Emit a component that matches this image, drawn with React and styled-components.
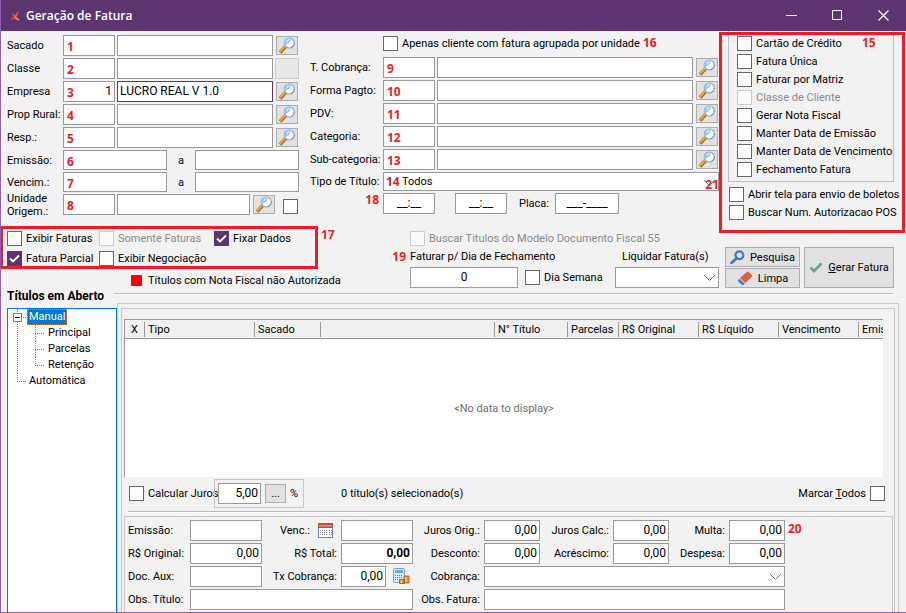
import React from "react";
import styled, { createGlobalStyle, css } from "styled-components";

const PURPLE = "#5c3571";
const RED = "#ed1c24";
const FACE = "#f2f2f2";
const EDGE = "#999999";
const SOFT = "#c8c8c8";

const GlobalStyle = createGlobalStyle`
  *, *::before, *::after { box-sizing: border-box; }
  body { margin: 0; background: ${FACE}; }
  body, input, select, button, table {
    font-family: Roboto, "Liberation Sans", sans-serif;
    font-size: 11px;
    line-height: 13px;
    color: #000;
  }
`;

/* ---------- window ---------- */

const Window = styled.div`
  display: flex;
  flex-direction: column;
  min-height: 100vh;
  border: solid #8c5fb0;
  border-width: 0 0 1px 1px;
  background: ${FACE};
  overflow: hidden;
  white-space: nowrap;
`;

const TitleBar = styled.header`
  display: flex;
  align-items: center;
  height: 31px;
  margin-left: -1px;
  padding-left: 9px;
  background: ${PURPLE};
  color: #fff;
`;

const Title = styled.h1`
  flex: 1;
  margin: 0 0 0 4px;
  font: 600 12px/16px "Open Sans", "Noto Sans", sans-serif;
`;

const WindowButton = styled.button`
  display: grid;
  place-items: center;
  width: 46px;
  height: 31px;
  padding: 0;
  border: 0;
  background: none;
  color: #fff;
`;

/* ---------- shared controls ---------- */

const controlBase = css`
  width: ${(p) => (p.$w ? `${p.$w}px` : "100%")};
  height: ${(p) => p.$h || 21}px;
  min-width: 0;
  margin: 0;
  border: 1px solid ${(p) => (p.$active ? PURPLE : EDGE)};
  border-radius: 0;
  background: #fff;
  outline: none;
  font-size: 12px;
`;

const TextBox = styled.input`
  ${controlBase}
  padding: 0 2px 2px;
  text-align: ${(p) => p.$align || "left"};
  font-weight: ${(p) => (p.$bold ? 700 : 400)};
`;

const SelectWrap = styled.div`
  position: relative;
  min-width: 0;
  grid-column: ${(p) => p.$span || "auto"};
`;

const SelectBox = styled.select`
  ${controlBase}
  display: block;
  padding: 0 20px 0 ${(p) => p.$indent || 3}px;
  appearance: none;
  font-size: 11px;
`;

const SelectArrow = styled.svg`
  position: absolute;
  top: 7px;
  right: 3px;
  pointer-events: none;
`;

const Span = styled.div`
  grid-column: span ${(p) => p.$n};
  display: flex;
  min-width: 0;
`;

const Marked = styled.div`
  position: relative;
  display: flex;
  flex: none;
`;

const Badge = styled.span`
  color: ${RED};
  font: bold 12px/14px "Open Sans", "Noto Sans", sans-serif;
`;

const OverBadge = styled(Badge)`
  position: absolute;
  left: 4px;
  top: 5px;
  pointer-events: none;
`;

const ArrowBadge = styled(Badge)`
  position: absolute;
  right: 0;
  top: 6px;
  pointer-events: none;
`;

const SideBadge = styled(Badge)`
  position: absolute;
  right: 100%;
  top: 0;
  margin-right: 4px;
`;

const EndBadge = styled(Badge)`
  position: absolute;
  left: 100%;
  top: 2px;
  margin-left: 3px;
`;

const CheckLabel = styled.label`
  display: flex;
  align-items: center;
  gap: 4px;
  height: 15px;
  color: ${(p) => (p.$off ? "#8a8a8a" : "#000")};
`;

const CheckBox = styled.input`
  flex: none;
  width: 15px;
  height: 15px;
  margin: 0;
  appearance: none;
  border: 1px solid #666;
  background: #fff;

  &:checked {
    border-color: ${PURPLE};
    background: ${PURPLE};
  }
  &:disabled { border-color: #ccc; background: #fafafa; }
`;

const TickHolder = styled.span`
  position: relative;
  display: flex;
`;

const Tick = styled.svg`
  position: absolute;
  inset: 0;
  pointer-events: none;
`;

const PushButton = styled.button`
  display: flex;
  align-items: center;
  justify-content: center;
  gap: ${(p) => p.$gap || 0}px;
  flex: none;
  width: ${(p) => p.$w}px;
  height: ${(p) => p.$h}px;
  margin: ${(p) => p.$m || 0};
  padding: 0;
  border: 1px solid ${(p) => (p.disabled ? "#ccc" : "#adadad")};
  border-radius: 0;
  background: ${(p) => (p.disabled ? "#e8e8e8" : "#e1e1e1")};
`;

/* ---------- top form ---------- */

const FormArea = styled.section`
  display: grid;
  grid-template-columns: 298px minmax(0, 1fr) 187px;
  height: 195px;
`;

const Rows = styled.div`
  display: flex;
  flex-direction: column;
  gap: 2px;
  padding: ${(p) => p.$pad};
`;

const FieldRow = styled.div`
  display: flex;
  align-items: center;
  height: ${(p) => p.$h || 21}px;
  gap: 2px;
`;

const FieldLabel = styled.label`
  flex: none;
  width: ${(p) => p.$w}px;
  margin-right: -2px;
  white-space: pre;
`;

const Between = styled.label`
  flex: 1;
  text-align: center;
`;

const AgreeRow = styled.div`
  display: flex;
  align-items: center;
  gap: 3px;
  height: 20px;
  padding: 0 0 4px 73px;
`;

const TimeRow = styled.div`
  display: flex;
  align-items: center;
  height: 21px;
  padding-left: 73px;
`;

const TimeEnd = styled(Marked)`
  margin-left: 20px;
`;

const PlateLabel = styled.label`
  width: 48px;
  padding-left: 12px;
`;

const FillSelect = styled(SelectWrap)`
  flex: 1;
`;

const TypeBadge = styled(OverBadge)`
  left: 3px;
  top: 3px;
`;

const ExtraCheck = styled(CheckBox)`
  margin: 3px 1px 0 5px;
`;

const redFrame = css`
  position: relative;
  &::after {
    content: "";
    position: absolute;
    border: 3px solid ${RED};
    pointer-events: none;
  }
`;

const OptionsColumn = styled.div`
  ${redFrame}
  padding: 0 10px 0 9px;
  &::after { inset: 1px 1px -7px 0; }
`;

const OptionsGroup = styled.fieldset`
  position: relative;
  display: flex;
  flex-direction: column;
  gap: 3px;
  margin: 0 2px 5px 0;
  padding: 5px 0 4px 8px;
  border: solid #bfbfbf;
  border-width: 0 1px 1px;
  min-width: 0;
`;

const GroupBadge = styled(Badge)`
  position: absolute;
  left: 133px;
  top: 5px;
`;

const LooseOptions = styled.div`
  display: flex;
  flex-direction: column;
  gap: 3px;
  padding-left: 1px;
`;

/* ---------- filters band ---------- */

const FilterArea = styled.section`
  display: flex;
  height: 64px;
  padding-right: 12px;
`;

const FilterLeft = styled.div`
  flex: none;
  width: 339px;
`;

const FilterChecks = styled.div`
  ${redFrame}
  display: grid;
  grid-template-columns: 92px 115px auto;
  align-content: start;
  gap: 5px 0;
  width: 317px;
  height: 43px;
  padding: 5px 0 0 6px;
  &::after { inset: 0 0 0 -1px; }
`;

const Legend = styled.div`
  display: flex;
  align-items: center;
  gap: 6px;
  height: 15px;
  margin: 4px 0 0 130px;
`;

const Swatch = styled.span`
  flex: none;
  width: 11px;
  height: 11px;
  background: #f00;
`;

const FilterMiddle = styled.div`
  flex: 1;
  display: grid;
  grid-template-columns: 108px 1fr 104px;
  grid-template-rows: 15px 13px 21px;
  row-gap: 4px;
  align-items: center;
  padding: 5px 0 0 70px;
`;

const HeadLabel = styled.label`
  position: relative;
  grid-column: ${(p) => p.$col};
  padding-left: ${(p) => p.$indent || 0}px;
`;

const WeekCheck = styled.div`
  padding-left: 7px;
`;

const Actions = styled.div`
  display: grid;
  grid-template-columns: 75px 90px;
  gap: 1px 4px;
  align-content: start;
  padding: 21px 0 0 6px;
`;

const TallCell = styled.div`
  grid-column: 2;
  grid-row: 1 / 3;
`;

/* ---------- lower area ---------- */

const SectionHead = styled.div`
  display: flex;
  height: 13px;
  padding: 0 13px 0 6px;
`;

const SectionTitle = styled.h2`
  width: 107px;
  margin: 0;
  font-size: 12px;
  line-height: 13px;
  font-weight: 700;
`;

const Rule = styled.div`
  flex: 1;
  height: 2px;
  margin-top: 3px;
  border-top: 1px solid #bbb;
  background: #fff;
`;

const DetailRule = styled(Rule)`
  flex: none;
  margin: 0 8px 0 4px;
`;

const Lower = styled.main`
  flex: 1;
  display: flex;
  padding: 0 7px 0 6px;
`;

const TreeBox = styled.nav`
  flex: none;
  width: 110px;
  margin-top: 5px;
  padding-left: 6px;
  border: 1px solid #0078d7;
  border-bottom: 0;
  background: #fff;
`;

const TreeList = styled.ul`
  margin: 0;
  padding: 0;
  list-style: none;
`;

const TreeItem = styled.li`
  position: relative;
  padding-left: ${(p) => (p.$child ? 19 : 13)}px;
  line-height: 16px;

  &::before {
    content: "";
    position: absolute;
    left: ${(p) => (p.$child ? 8 : 3)}px;
    top: 0;
    width: 9px;
    height: 9px;
    border: dotted #808080;
    border-width: 0 0 1px 1px;
  }
  &:not(:last-child)::after {
    content: "";
    position: absolute;
    left: ${(p) => (p.$child ? 8 : 3)}px;
    top: 9px;
    bottom: 0;
    border-left: 1px dotted #808080;
  }
`;

const TreeLink = styled.a`
  display: inline-block;
  height: 16px;
  padding: 0 2px;
  color: ${(p) => (p.$on ? "#fff" : "#000")};
  background: ${(p) => (p.$on ? "#0078d7" : "none")};
  outline: ${(p) => (p.$on ? "1px dotted #e08030" : "none")};
  outline-offset: -1px;
  text-decoration: none;
`;

const Toggle = styled.button`
  position: absolute;
  z-index: 1;
  left: -1px;
  top: 4px;
  display: grid;
  place-items: center;
  width: 9px;
  height: 9px;
  padding: 0;
  border: 1px solid #808080;
  background: #fff;
`;

const OuterPanel = styled.div`
  flex: 1;
  display: flex;
  min-width: 0;
  padding: 4px 3px 0;
  border: 1px solid ${SOFT};
  border-bottom: 0;
`;

const InnerPanel = styled.div`
  flex: 1;
  display: flex;
  flex-direction: column;
  min-width: 0;
  padding: 10px 0 0 2px;
  border: 1px solid ${SOFT};
  border-bottom: 0;
`;

const DataGrid = styled.div`
  flex: 1;
  display: flex;
  flex-direction: column;
  min-height: 158px;
  margin-right: 11px;
  border: solid ${EDGE};
  border-width: 1px 0 0 1px;
  background: #fff;
  overflow: hidden;
`;

const GridTable = styled.table`
  width: 814px;
  table-layout: fixed;
  border-collapse: separate;
  border-spacing: 0;
`;

const HeadCell = styled.th`
  width: ${(p) => p.$w}px;
  height: 19px;
  padding: 1px 0 0 ${(p) => (p.$first ? 6 : 3)}px;
  border-bottom: 1px solid ${EDGE};
  background: linear-gradient(${EDGE} 0 0) right 0 top 2px / 1px 15px no-repeat #f0f0f0;
  font-weight: 400;
  text-align: left;
`;

const Empty = styled.p`
  flex: 1;
  display: grid;
  place-items: center;
  margin: 0;
  color: #6d6d6d;
`;

const JurosBar = styled.div`
  display: flex;
  align-items: center;
  height: 34px;
  padding: 0 9px 1px 5px;
`;

const JurosCheck = styled.div`
  width: 85px;
`;

const JurosBox = styled.div`
  display: flex;
  align-items: center;
  gap: 4px;
  width: 90px;
  height: 29px;
  padding: 0 3px;
  border: 1px solid ${SOFT};
`;

const Selected = styled.output`
  flex: 1;
  padding-left: 37px;
`;

const Detail = styled.form`
  display: grid;
  grid-template-columns: 62px 72px 79px 72px 71px 56px 73px 56px 60px 56px;
  gap: 2px 0;
  align-items: center;
  margin: 3px 1px 0 0;
  padding: 3px 3px 2px;
  border: 1px solid ${SOFT};
  border-bottom: 0;
`;

const DetailLabel = styled.label`
  display: flex;
  align-items: center;
  justify-content: ${(p) => (p.$left ? "flex-start" : "flex-end")};
  gap: 8px;
  padding-right: ${(p) => p.$pr || 4}px;
`;

const FeeCell = styled.div`
  display: flex;
  align-items: center;
  gap: 7px;
`;

/* ---------- icons ---------- */

const AppIcon = () => (
  <svg width="13" height="14" viewBox="0 0 13 14" aria-hidden="true">
    <path d="M9.500 1L8.500 6.500 6 9 1 11.500 4.500 7.500 2.500 4 6 6.500z" fill="#ef5a2a" />
    <path d="M6.500 7.500L11 11 9 11.500 5 9z" fill="#f7913c" />
    <path d="M5 7L2 11.500 6.500 9.500z" fill="#e2342c" />
  </svg>
);

const LensIcon = () => (
  <svg width="18" height="17" viewBox="0 0 18 17" aria-hidden="true">
    <path d="M2 15.5l5.5-6" stroke="#8d6a3b" strokeWidth="3.6" />
    <path d="M1.8 14.8l5.2-5.6" stroke="#f5a623" strokeWidth="2.4" />
    <circle cx="11.3" cy="6" r="5" fill="#fff" stroke="#8fa6cf" strokeWidth="1.2" />
    <path d="M7 8.5a5 5 0 016-7.3L12 5z" fill="#9cc6f5" />
    <path d="M9 4.5a3 3 0 012.5-2" stroke="#e8f4ff" strokeWidth="1.2" fill="none" />
    <path d="M13.5 10.2a5 5 0 002.8-4.5" stroke="#4f6ba8" strokeWidth="1" fill="none" strokeDasharray="1 1" />
  </svg>
);

const SearchIcon = () => (
  <svg width="15" height="14" viewBox="0 0 15 14" aria-hidden="true">
    <circle cx="9.4" cy="5.2" r="3.9" fill="none" stroke="#4478b6" strokeWidth="2.2" />
    <path d="M6.6 8.2L1.6 12.8" stroke="#4478b6" strokeWidth="2.8" strokeLinecap="round" />
  </svg>
);

const EraserIcon = () => (
  <svg width="16" height="15" viewBox="0 0 16 15" aria-hidden="true">
    <path d="M9.5 1.2Q10.500 0 11.700 1L14.800 3.800Q15.800 5 14.800 6L8.500 12 3 7z" fill="#dc6044" />
    <path d="M2.500 7.700L7.800 12.500 6.800 13.800Q5.500 14.300 4.500 13.500L1 10.200Q.5 9.500 1.200 8.900z" fill="#4a7dbb" />
  </svg>
);

const CheckIcon = () => (
  <svg width="14" height="11" viewBox="0 0 14 11" aria-hidden="true">
    <path d="M1.500 5.500L5 9 12.500 1.500" fill="none" stroke="#6f9f8e" strokeWidth="2.700" />
  </svg>
);

const CalendarIcon = () => (
  <svg width="15" height="15" viewBox="0 0 15 15" aria-hidden="true">
    <rect x=".5" y=".5" width="14" height="14" fill="#fff" stroke="#6a87c8" />
    <path d="M0 0h15v5H0z" fill="#c94a3d" />
    <path d="M1 2h13v1.500H1z" fill="#ea9183" />
    <path d="M2 7.500h8M2 9.500h8M2 11.500h8" stroke="#8b96b5" strokeDasharray="1 1" />
    <path d="M11 7.500h3M11 9.500h3M11 11.500h3" stroke="#e5483d" strokeDasharray="1 1" />
  </svg>
);

const CalculatorIcon = () => (
  <svg width="17" height="17" viewBox="0 0 17 17" aria-hidden="true">
    <rect x=".5" y=".5" width="11" height="14" rx="1" fill="#dfe9fa" stroke="#7f9bd1" />
    <rect x="2" y="2" width="8" height="3" fill="#5fb0e6" />
    <path d="M2 7.500h5M2 9.500h5M2 11.500h4" stroke="#5373b8" strokeDasharray="1 1" />
    <path d="M8 7.500h2M8 9.500h2" stroke="#d8423a" strokeDasharray="1 1" />
    <path d="M11 8h5v7h-5zM6.500 11.500h5v4h-5z" fill="#d9953f" stroke="#8f5a22" strokeWidth=".8" />
    <path d="M13 9v5M8.500 12.500v2.500" stroke="#ffe3a0" strokeWidth="1.200" />
  </svg>
);

const Arrow = () => (
  <SelectArrow width="13" height="8" viewBox="0 0 13 8" aria-hidden="true">
    <path d="M1 1l5.500 5.500L12 1" fill="none" stroke="#777" />
  </SelectArrow>
);

/* ---------- composed parts ---------- */

function Check({ label, checked, disabled }) {
  return (
    <CheckLabel $off={disabled}>
      <TickHolder>
        <CheckBox type="checkbox" defaultChecked={checked} disabled={disabled} />
        {checked && (
          <Tick width="15" height="15" viewBox="0 0 15 15">
            <path d="M3 7.500l3 3L12 4.500" fill="none" stroke="#fff" strokeWidth="1.800" />
          </Tick>
        )}
      </TickHolder>
      {label}
    </CheckLabel>
  );
}

function SearchButton({ label }) {
  return (
    <PushButton type="button" $w={22} $h={19} $m="0 1px" aria-label={`Buscar ${label}`}>
      <LensIcon />
    </PushButton>
  );
}

function Lookup({ id, label, n, labelWidth, code, text, blank, children }) {
  return (
    <FieldRow>
      <FieldLabel htmlFor={id} $w={labelWidth}>{label}</FieldLabel>
      <Marked>
        <TextBox id={id} $w={52} $align="right" defaultValue={code} />
        <OverBadge>{n}</OverBadge>
      </Marked>
      <TextBox aria-label={`${label} descrição`} defaultValue={text} $active={!!text} />
      {blank ? <PushButton type="button" disabled $w={24} $h={21} aria-label={label} /> : <SearchButton label={label} />}
      {children}
    </FieldRow>
  );
}

function DateRange({ id, label, n }) {
  return (
    <FieldRow $h={20}>
      <FieldLabel htmlFor={id} $w={56}>{label}</FieldLabel>
      <Marked>
        <TextBox id={id} $w={104} $h={20} />
        <OverBadge>{n}</OverBadge>
      </Marked>
      <Between htmlFor={`${id}-fim`}>a</Between>
      <Marked>
        <TextBox id={`${id}-fim`} $w={104} $h={20} />
      </Marked>
    </FieldRow>
  );
}

function Amount({ id, label, value = "0,00", bold }) {
  return (
    <>
      <DetailLabel htmlFor={id}>{label}</DetailLabel>
      <TextBox id={id} $align="right" $bold={bold} defaultValue={value} />
    </>
  );
}

const leftLookups = [
  { id: "sacado", label: "Sacado", n: 1 },
  { id: "classe", label: "Classe", n: 2, blank: true },
  { id: "empresa", label: "Empresa", n: 3, code: "1", text: "LUCRO REAL V 1.0" },
  { id: "prop", label: "Prop Rural:", n: 4 },
  { id: "resp", label: "Resp.:", n: 5 },
];

const middleLookups = [
  { id: "tcob", label: "T. Cobrança:", n: 9 },
  { id: "forma", label: "Forma Pagto:", n: 10 },
  { id: "pdv", label: "PDV:", n: 11 },
  { id: "cat", label: "Categoria:", n: 12 },
  { id: "subcat", label: "Sub-categoria:", n: 13 },
];

const options = [
  "Cartão de Crédito", "Fatura Única", "Faturar por Matriz", "Classe de Cliente",
  "Gerar Nota Fiscal", "Manter Data de Emissão", "Manter Data de Vencimento", "Fechamento Fatura",
];

const columns = [
  ["X", 20], ["Tipo", 110], ["Sacado", 66], ["", 174], ["N° Título", 73], ["Parcelas", 51],
  ["R$ Original", 80], ["R$ Líquido", 80], ["Vencimento", 80], ["Emis", 80],
];

export default function App() {
  return (
    <Window>
      <GlobalStyle />
      <TitleBar>
        <AppIcon />
        <Title>Geração de Fatura</Title>
        <WindowButton aria-label="Minimizar">
          <svg width="11" height="11"><path d="M0 5.500h11" stroke="#fff" /></svg>
        </WindowButton>
        <WindowButton aria-label="Maximizar">
          <svg width="11" height="11"><rect x=".5" y=".5" width="9" height="9" fill="none" stroke="#fff" /></svg>
        </WindowButton>
        <WindowButton aria-label="Fechar">
          <svg width="11" height="11"><path d="M.5.5l10 10M10.500.5l-10 10" stroke="#fff" strokeWidth="1.200" /></svg>
        </WindowButton>
      </TitleBar>

      <FormArea>
        <Rows $pad="4px 0 0 6px">
          {leftLookups.map((f) => <Lookup key={f.id} labelWidth={56} {...f} />)}
          <DateRange id="emissao" label="Emissão:" n={6} />
          <DateRange id="vencim" label="Vencim.:" n={7} />
          <Lookup id="unidade" label={"Unidade\nOrigem.:"} n={8} labelWidth={56}>
            <ExtraCheck type="checkbox" aria-label="Unidade de origem" />
          </Lookup>
        </Rows>

        <Rows $pad="4px 0 0 11px">
          <AgreeRow>
            <Check label="Apenas cliente com fatura agrupada por unidade" />
            <Badge>16</Badge>
          </AgreeRow>
          {middleLookups.map((f) => <Lookup key={f.id} labelWidth={73} {...f} />)}
          <FieldRow $h={19}>
            <FieldLabel htmlFor="tipo" $w={73}>Tipo de Título:</FieldLabel>
            <FillSelect>
              <SelectBox id="tipo" $h={19} $indent={18}>
                <option>Todos</option>
              </SelectBox>
              <Arrow />
              <TypeBadge>14</TypeBadge>
              <ArrowBadge>21</ArrowBadge>
            </FillSelect>
          </FieldRow>
          <TimeRow>
            <Marked>
              <SideBadge>18</SideBadge>
              <TextBox $w={52} $align="center" defaultValue="__:__" aria-label="Hora inicial" />
            </Marked>
            <TimeEnd>
              <TextBox $w={52} $align="center" defaultValue="__:__" aria-label="Hora final" />
            </TimeEnd>
            <PlateLabel htmlFor="placa">Placa:</PlateLabel>
            <TextBox id="placa" $w={64} $align="center" defaultValue="___-____" />
          </TimeRow>
        </Rows>

        <OptionsColumn>
          <OptionsGroup>
            {options.map((o) => <Check key={o} label={o} disabled={o === "Classe de Cliente"} />)}
            <GroupBadge>15</GroupBadge>
          </OptionsGroup>
          <LooseOptions>
            <Check label="Abrir tela para envio de boletos" />
            <Check label="Buscar Num. Autorizacao POS" />
          </LooseOptions>
        </OptionsColumn>
      </FormArea>

      <FilterArea>
        <FilterLeft>
          <FilterChecks>
            <Check label="Exibir Faturas" />
            <Check label="Somente Faturas" disabled />
            <Check label="Fixar Dados" checked />
            <Check label="Fatura Parcial" checked />
            <Check label="Exibir Negociação" />
            <EndBadge>17</EndBadge>
          </FilterChecks>
          <Legend><Swatch />Títulos com Nota Fiscal não Autorizada</Legend>
        </FilterLeft>

        <FilterMiddle>
          <Span $n={3}><Check label="Buscar Titulos do Modelo Documento Fiscal 55" disabled /></Span>
          <HeadLabel htmlFor="dia" $col="1 / 3"><SideBadge>19</SideBadge>Faturar p/ Dia de Fechamento</HeadLabel>
          <HeadLabel htmlFor="liquidar" $col="3" $indent={7}>Liquidar Fatura(s)</HeadLabel>
          <TextBox id="dia" $align="center" defaultValue="0" />
          <WeekCheck><Check label="Dia Semana" /></WeekCheck>
          <SelectWrap>
            <SelectBox id="liquidar"><option></option></SelectBox>
            <Arrow />
          </SelectWrap>
        </FilterMiddle>

        <Actions>
          <PushButton type="button" $w={75} $h={20} $gap={5}><SearchIcon />Pesquisa</PushButton>
          <TallCell>
            <PushButton type="button" $w={90} $h={41} $gap={5}>
              <CheckIcon /><span><u>G</u>erar Fatura</span>
            </PushButton>
          </TallCell>
          <PushButton type="button" $w={75} $h={20} $gap={5}><EraserIcon />Limpa</PushButton>
        </Actions>
      </FilterArea>

      <SectionHead>
        <SectionTitle>Títulos em Aberto</SectionTitle>
        <Rule />
      </SectionHead>

      <Lower>
        <TreeBox aria-label="Títulos">
          <TreeList>
            <TreeItem>
              <Toggle aria-label="Recolher Manual">
                <svg width="5" height="1"><path d="M0 .5h5" stroke="#000" /></svg>
              </Toggle>
              <TreeLink href="#manual" $on>Manual</TreeLink>
              <TreeList>
                <TreeItem $child><TreeLink href="#principal">Principal</TreeLink></TreeItem>
                <TreeItem $child><TreeLink href="#parcelas">Parcelas</TreeLink></TreeItem>
                <TreeItem $child><TreeLink href="#retencao">Retenção</TreeLink></TreeItem>
              </TreeList>
            </TreeItem>
            <TreeItem><TreeLink href="#automatica">Automática</TreeLink></TreeItem>
          </TreeList>
        </TreeBox>

        <OuterPanel>
          <InnerPanel>
            <DataGrid>
              <GridTable>
                <thead>
                  <tr>
                    {columns.map(([name, w], i) => (
                      <HeadCell key={i} $w={w} $first={i === 0}>{name}</HeadCell>
                    ))}
                  </tr>
                </thead>
              </GridTable>
              <Empty>&lt;No data to display&gt;</Empty>
            </DataGrid>

            <JurosBar>
              <JurosCheck><Check label="Calcular Juros" /></JurosCheck>
              <JurosBox>
                <TextBox $w={43} $align="right" defaultValue="5,00" aria-label="Juros (%)" />
                <PushButton type="button" $w={21} $h={19} aria-label="Opções de juros">...</PushButton>
                <span>%</span>
              </JurosBox>
              <Selected>0 título(s) selecionado(s)</Selected>
              <CheckLabel>
                <span>Marcar <u>T</u>odos</span>
                <CheckBox type="checkbox" />
              </CheckLabel>
            </JurosBar>
            <DetailRule />

            <Detail>
              <DetailLabel htmlFor="d-emissao" $left>Emissão:</DetailLabel>
              <TextBox id="d-emissao" />
              <DetailLabel htmlFor="d-venc" $pr={8}>Venc.:<CalendarIcon /></DetailLabel>
              <TextBox id="d-venc" />
              <Amount id="d-jo" label="Juros Orig.:" />
              <Amount id="d-jc" label="Juros Calc.:" />
              <DetailLabel htmlFor="d-multa">Multa:</DetailLabel>
              <Marked>
                <TextBox id="d-multa" $align="right" defaultValue="0,00" />
                <EndBadge>20</EndBadge>
              </Marked>

              <DetailLabel htmlFor="d-orig" $left>R$ Original:</DetailLabel>
              <TextBox id="d-orig" $align="right" defaultValue="0,00" />
              <Amount id="d-total" label="R$ Total:" bold />
              <Amount id="d-desc" label="Desconto:" />
              <Amount id="d-acr" label="Acréscimo:" />
              <Amount id="d-desp" label="Despesa:" />

              <DetailLabel htmlFor="d-doc" $left>Doc. Aux:</DetailLabel>
              <TextBox id="d-doc" />
              <DetailLabel htmlFor="d-tx">Tx Cobrança:</DetailLabel>
              <FeeCell>
                <TextBox id="d-tx" $w={45} $align="right" defaultValue="0,00" />
                <CalculatorIcon />
              </FeeCell>
              <DetailLabel htmlFor="d-cob">Cobrança:</DetailLabel>
              <SelectWrap $span="span 5">
                <SelectBox id="d-cob"><option></option></SelectBox>
                <Arrow />
              </SelectWrap>

              <DetailLabel htmlFor="d-obst" $left>Obs. Título:</DetailLabel>
              <Span $n={3}><TextBox id="d-obst" /></Span>
              <DetailLabel htmlFor="d-obsf">Obs. Fatura:</DetailLabel>
              <Span $n={5}><TextBox id="d-obsf" /></Span>
            </Detail>
          </InnerPanel>
        </OuterPanel>
      </Lower>
    </Window>
  );
}
